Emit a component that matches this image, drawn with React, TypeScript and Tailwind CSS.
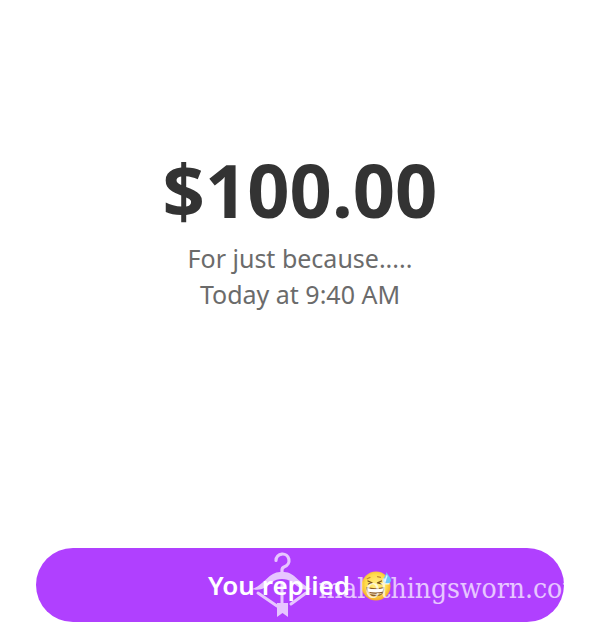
import React from 'react';

const SweatSmile = () => (
  <svg viewBox="0 0 30 32" className="h-8 w-[30px] shrink-0" role="img" aria-label="Grinning face with sweat">
    <defs>
      <radialGradient id="face" cx="50%" cy="45%" r="56%">
        <stop offset="0" stopColor="#fff08a" />
        <stop offset="0.65" stopColor="#ffdc4a" />
        <stop offset="1" stopColor="#f2a52c" />
      </radialGradient>
    </defs>
    <circle cx="14" cy="17" r="14.500" fill="url(#face)" />
    <path d="M5.200 9.800 8 8.400M15.500 7.600l3 .8" stroke="#c58a35" strokeWidth="1.200" strokeLinecap="round" />
    <path d="M6 12 10 13.800 6.400 15M19.500 12 15.500 13.800 19.500 15" fill="none" stroke="#7d5218" strokeWidth="1.300" strokeLinecap="round" strokeLinejoin="round" />
    <path d="M4.500 18c6 1.500 12 1.500 18 0 .8 5.500-3.300 9.500-9 9.500s-9.500-4-9-9.500Z" fill="#8a5a26" />
    <path d="M5.600 19.300c5 1.200 10.700 1.200 15.800 0l-.8 3.400c-4.700 1-9.500 1-14.200 0Z" fill="#fff" />
    <path d="M7.500 24.500c4 1 8.500 1 12 0" fill="none" stroke="#e9d3b0" strokeWidth="1.200" />
    <path d="M24.500 3c1.200 3.500 4.500 5 4.500 8.300 0 2.400-1.900 3.700-3.900 3.700s-3.900-1.500-3.900-3.700c0-2.800 2.800-4.600 3.300-8.300Z" fill="#6cc9f8" />
    <path d="M24.800 7c-.4 2-1.500 3.200-1.500 5" fill="none" stroke="#d6f2ff" strokeWidth="1.500" strokeLinecap="round" />
  </svg>
);

const Hanger = () => (
  <svg viewBox="0 0 60 66" className="h-[66px] w-[60px] shrink-0" fill="none" aria-hidden="true">
    <path d="M24 8.500a6.500 6.500 0 1 1 8.500 6.200c-2 .7-2.500 1.800-2.500 3.300v4" stroke="#fff" strokeWidth="3.200" strokeLinecap="round" />
    <path d="M0 37C11 34 17 20 28 20h4c11 0 17 14 28 17-4 1-9 1-12-1-6-4-10-9-18-9s-12 5-18 9c-3 2-8 2-12 1Z" fill="#fff" />
    <path d="m6 41 19 13M54 41 39 52" stroke="#fff" strokeWidth="3" strokeLinecap="round" />
    <path d="M30 31v20" stroke="#fff" strokeWidth="3" strokeLinecap="round" />
    <path d="M25 51h11v14l-5.500-4-5.500 4V51Z" fill="#fff" />
  </svg>
);

const Watermark = () => (
  <div className="pointer-events-none absolute inset-y-0 left-[41%] flex items-center gap-1.5 text-white opacity-70">
    <Hanger />
    <span className="pt-2 whitespace-nowrap font-['DejaVu_Serif_Condensed','DejaVu_Serif',serif] text-[28px] leading-8">
      malethingsworn.com
    </span>
  </div>
);

const App = () => {
  return (
    <main className="overflow-hidden bg-white px-9 pt-35 pb-3 font-['Noto_Sans',sans-serif]">
      <section className="text-center text-[#6b6b6b]">
        <h1 className="text-[74px] leading-25 font-bold text-[#333333]">$100.00</h1>
        <p className="text-[25px] leading-9">For just because.....</p>
        <p className="text-[25px] leading-9">Today at 9:40 AM</p>
      </section>

      <div className="relative mt-59">
        <button
          type="button"
          className="flex h-[74px] w-full items-center justify-center gap-3 rounded-full bg-[#b040ff] text-[26px] font-semibold text-white"
        >
          <span>You replied</span>
          <SweatSmile />
        </button>
        <Watermark />
      </div>
    </main>
  );
};

export default App;
